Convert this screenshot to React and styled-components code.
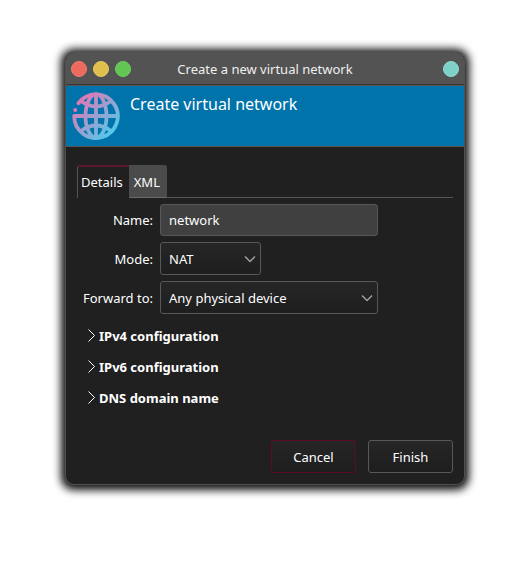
import React, { useState } from "react";
import styled, { createGlobalStyle } from "styled-components";

const GlobalStyle = createGlobalStyle`
  *, *::before, *::after { box-sizing: border-box; }
  body {
    margin: 0;
    background: #fff;
    color: #fff;
    font: 13px/18px "Noto Sans", sans-serif;
  }
  button, input, select { font: inherit; color: inherit; }
`;

const Desktop = styled.div`
  padding: 52px 65px 76px;
`;

const Window = styled.main`
  border: 1px solid #505050;
  border-top: 0;
  border-radius: 9px;
  background: #202020;
  box-shadow: 0 1px 9px 4px rgba(0, 0, 0, 0.95);
  overflow: hidden;
`;

const TitleBar = styled.header`
  display: grid;
  grid-template-columns: 1fr auto 1fr;
  align-items: center;
  height: 33px;
  padding: 1px 5px 0;
  background: #535353;
  border-bottom: 1px solid #363636;
`;

const WindowTitle = styled.div`
  color: #efefef;
`;

const WindowControls = styled.div`
  display: flex;
  justify-content: ${({ $end }) => ($end ? "flex-end" : "flex-start")};
  gap: 6px;
`;

const WindowButton = styled.button`
  width: 16px;
  height: 16px;
  padding: 0;
  border: 1px solid ${({ $edge }) => $edge};
  border-radius: 50%;
  background: ${({ $color }) => $color};
`;

const Banner = styled.div`
  display: flex;
  gap: 10px;
  height: 62px;
  padding: 6px;
  background: #0073ab;
  border-top: 1px solid #555;
  border-bottom: 1px solid #555;
`;

const BannerTitle = styled.h1`
  margin: 0;
  font-size: 16px;
  line-height: 24px;
  font-weight: 400;
`;

const Content = styled.div`
  padding: 18px 11px 11px;
`;

const TabList = styled.div`
  display: flex;
  height: 33px;
`;

const Tab = styled.button`
  padding: ${({ $active }) => ($active ? "0 6px 2px 3px" : "0 6px 0 4px")};
  border: 1px solid ${({ $active }) => ($active ? "#555" : "#4b4b4b")};
  border-top: 2px solid ${({ $active }) => ($active ? "#5c1630" : "#4b4b4b")};
  border-right-width: ${({ $active }) => ($active ? 0 : "1px")};
  border-bottom: ${({ $active }) => ($active ? 0 : "1px solid #6a6a6a")};
  border-radius: ${({ $active }) => ($active ? "3px 0 0 0" : "0 3px 0 0")};
  background: ${({ $active }) => ($active ? "transparent" : "#4b4b4b")};
`;

const TabRule = styled.div`
  flex: 1;
  border-bottom: 1px solid #555;
`;

const Form = styled.form`
  display: grid;
  grid-template-columns: auto 1fr;
  gap: 6px 7px;
  align-items: center;
  padding: 6px 0 12px 6px;
`;

const Label = styled.label`
  text-align: right;
`;

const TextField = styled.input`
  width: 218px;
  height: 32px;
  padding: 0 8px;
  border: 1px solid #585858;
  border-radius: 3px;
  background: #404040;
  outline: 0;
`;

const SelectBox = styled.div`
  display: grid;
  width: ${({ $width }) => $width};
  > * { grid-area: 1 / 1; }
  svg {
    place-self: center end;
    margin-right: 4px;
    pointer-events: none;
  }
`;

const Select = styled.select`
  appearance: none;
  height: 33px;
  padding: 0 24px 0 8px;
  border: 1px solid #585858;
  border-radius: 3px;
  background: linear-gradient(#262626, #1e1e1e);
`;

const Sections = styled.div`
  display: grid;
  gap: 13px;
  padding: 1px 9px;
`;

const Section = styled.details`
  summary {
    display: flex;
    align-items: center;
    gap: 2px;
    font-weight: 700;
    list-style: none;
  }
  &[open] svg { transform: rotate(90deg); }
`;

const Actions = styled.footer`
  display: flex;
  justify-content: flex-end;
  gap: 12px;
  margin-top: 32px;
`;

const ActionButton = styled.button`
  width: 85px;
  height: 33px;
  padding: 0;
  border: 1px solid ${({ $accent }) => ($accent ? "#5c0c26" : "#585858")};
  border-radius: 3px;
  background: linear-gradient(#262626, #1e1e1e);
`;

function GlobeIcon() {
  return (
    <svg width="48" height="48" viewBox="0 0 48 48" fill="none" aria-hidden="true">
      <defs>
        <linearGradient id="globe" gradientUnits="userSpaceOnUse" x1="8" y1="8" x2="40" y2="40">
          <stop offset="0" stopColor="#e277b4" />
          <stop offset="1" stopColor="#56c8ea" />
        </linearGradient>
      </defs>
      <g stroke="url(#globe)" strokeWidth="3.8">
        <path d="M6.5 11.2A21.8 21.8 0 1 1 2.2 24" strokeLinecap="round" />
        <path d="M24 2V46M2 24H46" />
        <ellipse cx="24" cy="24" rx="10.5" ry="21.8" />
        <path d="M9 9Q24 20 39 9M9 39Q24 28 39 39" />
      </g>
      <circle cx="3.2" cy="18" r="2" fill="#e277b4" />
    </svg>
  );
}

function DownChevron() {
  return (
    <svg width="14" height="14" viewBox="0 0 14 14" fill="none" stroke="#a0a0a0" strokeWidth="1.5" aria-hidden="true">
      <path d="M2 4.5L7 9.5L12 4.5" />
    </svg>
  );
}

function RightChevron() {
  return (
    <svg width="11" height="16" viewBox="0 0 11 16" fill="none" stroke="#fff" aria-hidden="true">
      <path d="M2.5 1.5L8.5 7.5L2.5 13.5" />
    </svg>
  );
}

const SECTIONS = ["IPv4 configuration", "IPv6 configuration", "DNS domain name"];

export default function App() {
  const [name, setName] = useState("network");
  return (
    <>
      <GlobalStyle />
      <Desktop>
        <Window>
          <TitleBar>
            <WindowControls>
              <WindowButton aria-label="Close" $color="#ee6a5f" $edge="#f27d70" />
              <WindowButton aria-label="Minimize" $color="#dfc04f" $edge="#e8c95c" />
              <WindowButton aria-label="Maximize" $color="#62c554" $edge="#70d060" />
            </WindowControls>
            <WindowTitle>Create a new virtual network</WindowTitle>
            <WindowControls $end>
              <WindowButton aria-label="Keep above" $color="#7dd1c8" $edge="#8addd3" />
            </WindowControls>
          </TitleBar>
          <Banner>
            <GlobeIcon />
            <BannerTitle>Create virtual network</BannerTitle>
          </Banner>
          <Content>
            <TabList role="tablist">
              <Tab type="button" role="tab" aria-selected="true" $active>Details</Tab>
              <Tab type="button" role="tab" aria-selected="false">XML</Tab>
              <TabRule />
            </TabList>
            <Form>
              <Label htmlFor="name">Name:</Label>
              <TextField id="name" value={name} onChange={(e) => setName(e.target.value)} />
              <Label htmlFor="mode">Mode:</Label>
              <SelectBox $width="101px">
                <Select id="mode"><option>NAT</option></Select>
                <DownChevron />
              </SelectBox>
              <Label htmlFor="forward">Forward to:</Label>
              <SelectBox $width="218px">
                <Select id="forward"><option>Any physical device</option></Select>
                <DownChevron />
              </SelectBox>
            </Form>
            <Sections>
              {SECTIONS.map((title) => (
                <Section key={title}>
                  <summary><RightChevron />{title}</summary>
                </Section>
              ))}
            </Sections>
            <Actions>
              <ActionButton type="button" $accent>Cancel</ActionButton>
              <ActionButton type="button">Finish</ActionButton>
            </Actions>
          </Content>
        </Window>
      </Desktop>
    </>
  );
}
